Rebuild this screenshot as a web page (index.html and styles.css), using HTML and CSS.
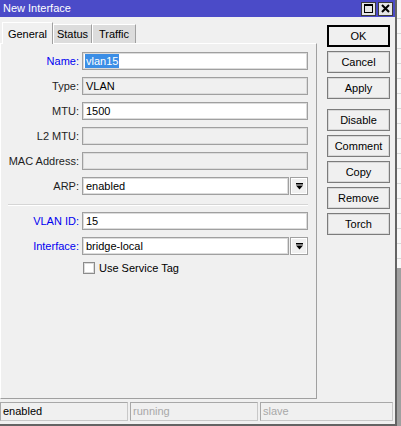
FILE: index.html
```html
<!DOCTYPE html>
<html>
<head>
<meta charset="utf-8">
<link rel="stylesheet" href="styles.css">
</head>
<body>
<div class="screen">
  <div class="window">
    <div class="titlebar">
      <span class="title">New Interface</span>
      <div class="tb-btns">
        <span class="tb-btn"><svg width="9" height="9" viewBox="0 0 9 9"><rect x="0.5" y="0.5" width="8" height="8" fill="none" stroke="#000" stroke-width="1"/><rect x="0" y="0" width="9" height="2" fill="#000"/></svg></span>
        <span class="tb-btn"><svg width="9" height="9" viewBox="0 0 9 9"><path d="M1 1 L8 8 M8 1 L1 8" stroke="#000" stroke-width="2"/></svg></span>
      </div>
    </div>
    <div class="main">
      <div class="left">
        <div class="tabs">
          <div class="tab active">General</div>
          <div class="tab t-status">Status</div>
          <div class="tab t-traffic">Traffic</div>
        </div>
        <div class="panel">
          <div class="form">
            <div class="row"><span class="label blue">Name:</span><div class="field"><span class="sel">vlan15</span></div></div>
            <div class="row"><span class="label">Type:</span><div class="field disabled">VLAN</div></div>
            <div class="row"><span class="label">MTU:</span><div class="field">1500</div></div>
            <div class="row"><span class="label">L2 MTU:</span><div class="field disabled"></div></div>
            <div class="row"><span class="label">MAC Address:</span><div class="field disabled"></div></div>
            <div class="row"><span class="label">ARP:</span><div class="field short">enabled</div><span class="drop"><svg width="7" height="7" viewBox="0 0 7 7"><rect x="0" y="0" width="7" height="1.5" fill="#000"/><path d="M0 2.5 L7 2.5 L3.5 6.5 Z" fill="#000"/></svg></span></div>
            <div class="sep"></div>
            <div class="row"><span class="label blue">VLAN ID:</span><div class="field">15</div></div>
            <div class="row"><span class="label blue">Interface:</span><div class="field short">bridge-local</div><span class="drop"><svg width="7" height="7" viewBox="0 0 7 7"><rect x="0" y="0" width="7" height="1.5" fill="#000"/><path d="M0 2.5 L7 2.5 L3.5 6.5 Z" fill="#000"/></svg></span></div>
            <div class="row check-row"><span class="checkbox"></span><span class="check-label">Use Service Tag</span></div>
          </div>
        </div>
      </div>
      <div class="buttons">
        <div class="btn default">OK</div>
        <div class="btn">Cancel</div>
        <div class="btn">Apply</div>
        <div class="btn spaced">Disable</div>
        <div class="btn">Comment</div>
        <div class="btn">Copy</div>
        <div class="btn">Remove</div>
        <div class="btn">Torch</div>
      </div>
    </div>
    <div class="statusbar">
      <div class="cell c1">enabled</div>
      <div class="cell c2 dim">running</div>
      <div class="cell c3 dim">slave</div>
    </div>
  </div>
  <div class="strip">
    <div class="strip-list"></div>
    <div class="strip-dark"></div>
  </div>
</div>
</body>
</html>
```
FILE: styles.css
```css
* { box-sizing: border-box; }
body {
  margin: 0;
  font-family: "Liberation Sans", Arial, sans-serif;
  font-size: 11px;
  color: #000;
}
.screen {
  display: flex;
  width: 401px;
  height: 426px;
  overflow: hidden;
  background: #a0a0a0;
}
.window {
  width: 397px;
  height: 426px;
  flex-shrink: 0;
  background: #f0f0f0;
  border-right: 2px solid #646464;
  border-bottom: 2px solid #646464;
  display: flex;
  flex-direction: column;
}
.titlebar {
  height: 17px;
  flex-shrink: 0;
  background: #4b4bc8;
  color: #fff;
  display: flex;
  align-items: center;
  justify-content: space-between;
  padding: 0 2px 0 3px;
}
.title { font-size: 11px; line-height: 17px; }
.tb-btns { display: flex; gap: 2px; }
.tb-btn {
  width: 15px;
  height: 14px;
  background: #e6e6e6;
  border: 1px solid #3c3c3c;
  display: flex;
  align-items: center;
  justify-content: center;
}
.main { display: flex; height: 385px; flex-shrink: 0; }
.left { width: 317px; display: flex; flex-direction: column; }
.tabs {
  height: 26px;
  padding: 5px 0 0 2px;
  display: flex;
  align-items: flex-end;
}
.tab {
  height: 19px;
  width: 39px;
  background: #dcdcdc;
  border-top: 1px solid #fff;
  border-left: 1px solid #fff;
  border-right: 1px solid #a0a0a0;
  display: flex;
  align-items: center;
  justify-content: center;
}
.tab.active {
  width: 51px;
  height: 22px;
  margin-bottom: -1px;
  background: #f0f0f0;
  position: relative;
  z-index: 1;
}
.tab.t-traffic { width: 44px; }
.panel {
  height: 356px;
  border-top: 1px solid #fff;
  border-left: 1px solid #fff;
  border-right: 1px solid #a0a0a0;
  border-bottom: 1px solid #a0a0a0;
  padding-top: 8px;
}
.form { display: flex; flex-direction: column; gap: 7px; }
.row { display: flex; align-items: center; height: 18px; }
.label {
  width: 78px;
  margin-right: 3px;
  text-align: right;
  color: #1e1e1e;
}
.label.blue { color: #0000f0; }
.field {
  width: 226px;
  height: 18px;
  background: #fff;
  border: 1px solid #a0a0a0;
  box-shadow: inset 0 0 0 1px #dcdcdc;
  padding-left: 3px;
  line-height: 16px;
  white-space: nowrap;
}
.field.disabled { background: #f0f0f0; }
.field.short { width: 207px; }
.sel {
  background: #3b8ee6;
  color: #fff;
  margin-left: -1px;
  padding: 1px 1px;
}
.drop {
  width: 18px;
  height: 18px;
  margin-left: 1px;
  background: #f0f0f0;
  border: 1px solid #a0a0a0;
  box-shadow: inset 0 0 0 1px #fff;
  display: flex;
  align-items: center;
  justify-content: center;
}
.sep {
  width: 300px;
  height: 2px;
  margin: 2px 0 -1px 7px;
  border-top: 1px solid #d5d5d5;
  border-bottom: 1px solid #fff;
}
.check-row { padding-left: 82px; height: 12px; }
.checkbox {
  width: 12px;
  height: 12px;
  background: #fff;
  border: 1px solid #8c8c8c;
  box-shadow: inset 0 0 0 1px #dcdcdc;
}
.check-label { margin-left: 4px; }
.buttons {
  width: 63px;
  margin-left: 10px;
  padding-top: 8px;
  display: flex;
  flex-direction: column;
  gap: 4px;
}
.btn {
  height: 22px;
  background: #f0f0f0;
  border: 1px solid #7c7c7c;
  box-shadow: inset 0 0 0 1px #d8d8d8;
  display: flex;
  align-items: center;
  justify-content: center;
}
.btn.default {
  border: 2px solid #000;
  box-shadow: none;
}
.btn.spaced { margin-top: 6px; }
.statusbar {
  display: flex;
  gap: 2px;
  height: 20px;
  flex-shrink: 0;
}
.cell {
  height: 19px;
  border: 1px solid #c8c8c8;
  border-top-color: #a8a8a8;
  border-left-color: #a8a8a8;
  padding-left: 2px;
  line-height: 17px;
}
.c1 { width: 128px; }
.c2 { width: 128px; }
.c3 { width: 133px; }
.dim { color: #a8a8a8; }
.strip { flex: 1; display: flex; flex-direction: column; }
.strip-list {
  height: 268px;
  background: #f8f8f8 repeating-linear-gradient(to bottom, transparent 0, transparent 14px, #d8d8d8 14px, #d8d8d8 15px);
  background-position: 0 4px;
}
.strip-dark { flex: 1; background: #a0a0a0; }
```
